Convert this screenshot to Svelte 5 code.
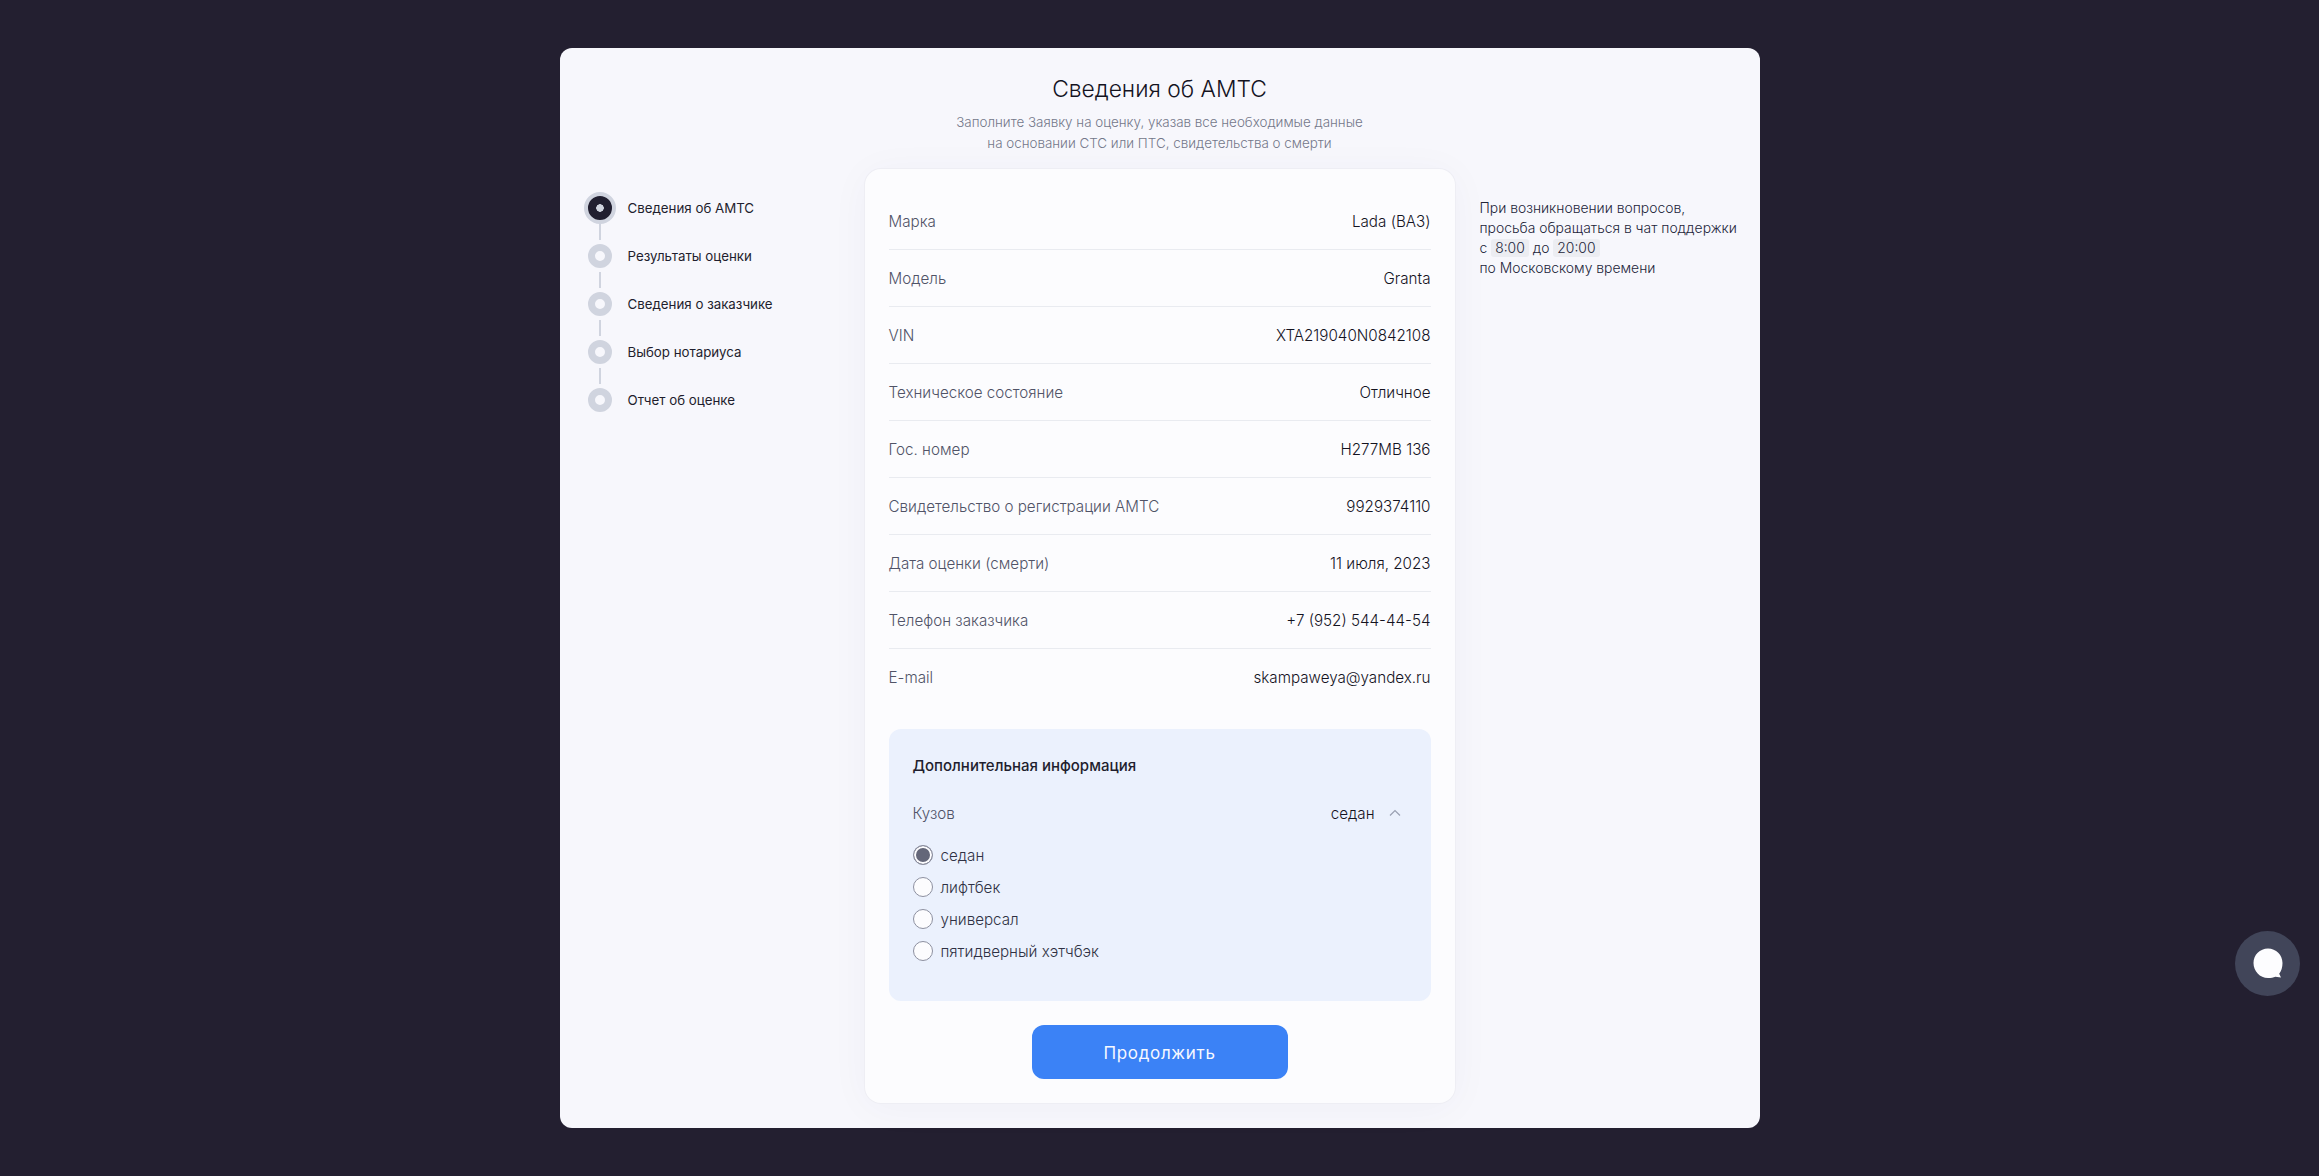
<script>
	const steps = ['Сведения об АМТС', 'Результаты оценки', 'Сведения о заказчике', 'Выбор нотариуса', 'Отчет об оценке'];
	const rows = [
		['Марка', 'Lada (ВАЗ)'],
		['Модель', 'Granta'],
		['VIN', 'XTA219040N0842108'],
		['Техническое состояние', 'Отличное'],
		['Гос. номер', 'Н277МВ 136'],
		['Свидетельство о регистрации АМТС', '9929374110'],
		['Дата оценки (смерти)', '11 июля, 2023'],
		['Телефон заказчика', '+7 (952) 544-44-54'],
		['E-mail', 'skampaweya@yandex.ru']
	];
	const bodies = ['седан', 'лифтбек', 'универсал', 'пятидверный хэтчбэк'];
	let body = $state('седан');
</script>

<div class="page">
	<div class="sheet">
		<header>
			<h1>Сведения об АМТС</h1>
			<p>Заполните Заявку на оценку, указав все необходимые данные<br />на основании СТС или ПТС, свидетельства о смерти</p>
		</header>

		<div class="columns">
			<ol class="steps">
				{#each steps as s, i}
					<li class:active={i === 0}>
						<span class="dot"></span>
						<span>{s}</span>
					</li>
				{/each}
			</ol>

			<main class="card">
				{#each rows as [label, value]}
					<div class="row">
						<span class="label">{label}</span>
						<span class="value">{value}</span>
					</div>
				{/each}

				<section class="extra">
					<h2>Дополнительная информация</h2>
					<div class="select">
						<span class="label">Кузов</span>
						<span class="value">{body}</span>
						<svg width="24" height="24" viewBox="0 0 24 24" fill="none" stroke="#9aa0b2" stroke-width="1.2">
							<path d="M7 14.500 12 9.500l5 5" />
						</svg>
					</div>
					<div class="radios">
						{#each bodies as b}
							<label>
								<input type="radio" name="body" value={b} bind:group={body} />
								<span>{b}</span>
							</label>
						{/each}
					</div>
				</section>

				<button class="next">Продолжить</button>
			</main>

			<aside>
				При возникновении вопросов,<br />
				просьба обращаться в чат поддержки<br />
				с <span class="time">8:00</span> до <span class="time">20:00</span><br />
				по Московскому времени
			</aside>
		</div>
	</div>

	<button class="chat" aria-label="Чат">
		<svg width="30" height="31" viewBox="0 0 30 31">
			<path fill="#fdfdff" d="M15 0.500C6.900 0.500 0.500 6.900 0.500 15S6.900 30 15 30c3.200 0 5.400-.3 7.400-1.200l5.600.8-1.800-3.800C28.400 23.200 29.500 19 29.500 15 29.500 6.900 23.100 0.500 15 0.500z" />
		</svg>
	</button>
</div>

<style>
	:global(body) {
		margin: 0;
		background: #231f30;
		font-family: 'Inter', 'Noto Sans', sans-serif;
		color: #1f1e2e;
	}

	.page {
		min-height: 100vh;
		box-sizing: border-box;
		padding: 48px 0;
		display: flex;
		justify-content: center;
	}

	.sheet {
		width: 1200px;
		height: 1080px;
		box-sizing: border-box;
		background: #f7f7fc;
		border-radius: 12px;
		padding: 24px 24px 26px 24px;
	}

	header {
		text-align: center;
		height: 97px;
	}

	h1 {
		margin: 0;
		font-size: 22.800px;
		line-height: 33px;
		font-weight: 300;
		color: #14131f;
	}

	header p {
		margin: 7px 0 0;
		font-size: 13.400px;
		line-height: 21px;
		font-weight: 300;
		color: #74778a;
	}

	.columns {
		display: grid;
		grid-template-columns: 257px 590px 1fr;
		gap: 0 24px;
	}

	.steps {
		list-style: none;
		margin: 15px 0 0;
		padding: 0;
	}

	.steps li {
		position: relative;
		display: flex;
		align-items: center;
		gap: 16px;
		height: 48px;
		font-size: 13.300px;
		color: #1f1e2e;
	}

	.dot {
		box-sizing: border-box;
		width: 24px;
		height: 24px;
		margin-left: 4px;
		border-radius: 50%;
		border: 7px solid #d0d4df;
		background: #f7f7fc;
		flex: none;
	}

	.active .dot {
		width: 32px;
		height: 32px;
		margin: 0 -4px 0 0;
		border: 4px solid #d0d4df;
		background: radial-gradient(circle, #d0d4df 0 3.500px, #211f30 4px);
	}

	.steps li:not(:last-child)::after {
		content: '';
		position: absolute;
		left: 15px;
		top: 40px;
		width: 2px;
		height: 16px;
		background: #d0d4df;
	}

	.card {
		box-sizing: border-box;
		height: 934px;
		background: #fcfcfe;
		border-radius: 16px;
		padding: 24px;
		box-shadow: 0 0 0 1px #eeeef4, 0 4px 40px rgba(60, 60, 100, 0.04);
	}

	.row {
		display: flex;
		justify-content: space-between;
		align-items: center;
		height: 56px;
		border-bottom: 1px solid #e9ebf0;
		font-size: 15.200px;
		font-weight: 300;
	}

	.row:last-of-type {
		border-bottom: none;
	}

	.label {
		color: #505367;
	}

	.value {
		color: #14131f;
	}

	.extra {
		box-sizing: border-box;
		height: 272px;
		margin-top: 24px;
		padding: 24px;
		background: #ebf1fd;
		border-radius: 12px;
		font-size: 15.200px;
		font-weight: 300;
	}

	h2 {
		margin: 0;
		padding-top: 1px;
		font-size: 15px;
		line-height: 23px;
		font-weight: 500;
	}

	.select {
		display: flex;
		align-items: center;
		gap: 8px;
		margin-top: 24px;
		height: 24px;
	}

	.select .label {
		flex: 1;
	}

	.radios {
		margin-top: 14px;
	}

	.radios label {
		display: flex;
		align-items: center;
		gap: 8px;
		height: 32px;
		color: #2f3144;
	}

	input {
		appearance: none;
		box-sizing: border-box;
		width: 20px;
		height: 20px;
		margin: 0;
		border-radius: 50%;
		border: 1px solid #8d90a0;
		background: #fcfcfe;
	}

	input:checked {
		background: #646779;
		box-shadow: inset 0 0 0 2px #fcfcfe;
	}

	.next {
		display: block;
		width: 256px;
		height: 54px;
		margin: 24px auto 0;
		padding-top: 2px;
		border: none;
		border-radius: 12px;
		background: #3b82f6;
		color: #f6f8ff;
		font-family: inherit;
		font-size: 17px;
		font-weight: 400;
		letter-spacing: 0.04em;
	}

	aside {
		font-size: 13.900px;
		line-height: 20px;
		font-weight: 300;
		color: #23253a;
		margin: 29px 0 0 1px;
		white-space: nowrap;
	}

	.time {
		display: inline-block;
		line-height: 18px;
		padding: 0 4px;
		background: #ecedf2;
		border-radius: 3px;
	}

	.chat {
		position: fixed;
		left: 2235px;
		top: 931px;
		width: 65px;
		height: 65px;
		padding: 0;
		border: none;
		border-radius: 50%;
		background: #414559;
		display: flex;
		align-items: center;
		justify-content: center;
	}
</style>
